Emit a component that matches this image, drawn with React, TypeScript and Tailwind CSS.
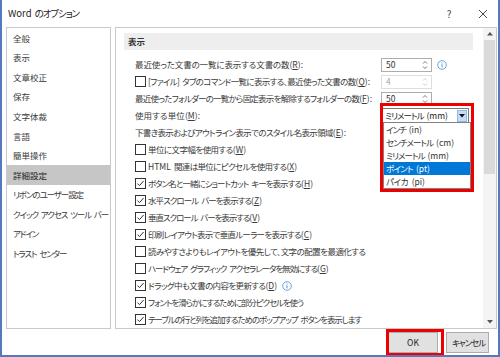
import React from "react";

/* latin run keeps its normal letter spacing */
const L = ({ children }: { children: React.ReactNode }) => <span className="tracking-normal">{children}</span>;

const K = ({ k, colon }: { k: string; colon?: boolean }) => (
  <span className="tracking-normal">
    (<span className="underline underline-offset-[1px]">{k}</span>){colon ? ":" : ""}
  </span>
);

/* text stretched to the exact width measured in the reference */
const J = ({ w, children, className = "" }: { w: string; children: React.ReactNode; className?: string }) => (
  <span
    className={`inline-block ${w} whitespace-nowrap leading-none tracking-[-1.1px] [word-spacing:2px] [text-align-last:justify] ${className}`}
  >
    {children}
  </span>
);

const CheckBox = ({ checked }: { checked: boolean }) => (
  <span className="w-[11px] h-[11px] shrink-0 border border-[#333333] bg-white flex items-center justify-center">
    {checked && (
      <svg width="9" height="9" viewBox="0 0 9 9">
        <polyline points="1.5,4.6 3.5,6.6 7.6,2" fill="none" stroke="#333" strokeWidth="1" />
      </svg>
    )}
  </span>
);

const Info = () => (
  <svg width="10" height="10" viewBox="0 0 10 10" className="shrink-0">
    <circle cx="5" cy="5" r="4.3" fill="none" stroke="#5b9bd5" strokeWidth="0.9" />
    <rect x="4.5" y="4.2" width="1" height="3.3" fill="#5b9bd5" />
    <rect x="4.5" y="2.4" width="1" height="1" fill="#5b9bd5" />
  </svg>
);

const Spin = ({ value, disabled }: { value: string; disabled?: boolean }) => (
  <div
    className={`w-[51px] h-[14px] border flex items-center justify-between pl-[4px] pr-[3px] bg-white ${
      disabled ? "border-[#dedede] text-[#a8a8a8]" : "border-[#adadad] text-[#333]"
    }`}
  >
    <span className="leading-none">{value}</span>
    <svg width="6" height="10" viewBox="0 0 6 10">
      <polyline points="1,3.5 3,1.5 5,3.5" fill="none" stroke={disabled ? "#c8c8c8" : "#666"} strokeWidth="0.9" />
      <polyline points="1,6.5 3,8.5 5,6.5" fill="none" stroke={disabled ? "#c8c8c8" : "#666"} strokeWidth="0.9" />
    </svg>
  </div>
);

type Row = {
  cb?: boolean;
  label: React.ReactNode;
  w: string;
  ctrl?: React.ReactNode;
  info?: boolean;
};

const rows: Row[] = [
  { label: <>最近使った文書の一覧に表示する文書の数<K k="R" colon /></>, w: "w-[168px]", ctrl: <Spin value="50" />, info: true },
  { cb: false, label: <>[ファイル] タブのコマンド一覧に表示する、最近使った文書の数<K k="Q" colon /></>, w: "w-[222px]", ctrl: <Spin value="4" disabled /> },
  { label: <>最近使ったフォルダーの一覧から固定表示を解除するフォルダーの数<K k="F" colon /></>, w: "w-[237px]", ctrl: <Spin value="50" /> },
  {
    label: <>使用する単位<K k="M" colon /></>,
    w: "w-[65px]",
    ctrl: (
      <div className="w-[88px] h-[15px] border border-[#7a7a7a] bg-white flex items-center justify-between pl-[3px] pr-[1px]">
        <J w="w-[63px]" className="text-[#222]">ミリメートル <L>(mm)</L></J>
        <span className="w-[10px] h-[12px] bg-[#c4dcf4] border border-[#8fbbe8] flex items-center justify-center">
          <svg width="6" height="4" viewBox="0 0 6 4">
            <polygon points="0,0 6,0 3,3.5" fill="#111" />
          </svg>
        </span>
      </div>
    ),
  },
  { label: <>下書き表示およびアウトライン表示でのスタイル名表示領域<K k="E" colon /></>, w: "w-[211px]" },
  { cb: false, label: <>単位に文字幅を使用する<K k="W" /></>, w: "w-[98px]" },
  { cb: false, label: <><L>HTML</L> 関連は単位にピクセルを使用する<K k="X" /></>, w: "w-[149px]" },
  { cb: true, label: <>ボタン名と一緒にショートカット キーを表示する<K k="H" /></>, w: "w-[165px]" },
  { cb: true, label: <>水平スクロール バーを表示する<K k="Z" /></>, w: "w-[114px]" },
  { cb: true, label: <>垂直スクロール バーを表示する<K k="V" /></>, w: "w-[112px]" },
  { cb: true, label: <>印刷レイアウト表示で垂直ルーラーを表示する<K k="C" /></>, w: "w-[164px]" },
  { cb: false, label: <>読みやすさよりもレイアウトを優先して、文字の配置を最適化する</>, w: "w-[217px]" },
  { cb: false, label: <>ハードウェア グラフィック アクセラレータを無効にする<K k="G" /></>, w: "w-[177px]" },
  { cb: true, label: <>ドラッグ中も文書の内容を更新する<K k="D" /></>, w: "w-[129px]", info: true },
  { cb: true, label: <>フォントを滑らかにするために部分ピクセルを使う</>, w: "w-[155px]" },
  { cb: true, label: <>テーブルの行と列を追加するためのポップアップ ボタンを表示します</>, w: "w-[212px]" },
];

const nav: { n: string; w?: string }[] = [
  { n: "全般" },
  { n: "表示" },
  { n: "文章校正" },
  { n: "保存" },
  { n: "文字体裁" },
  { n: "言語" },
  { n: "簡単操作" },
  { n: "詳細設定" },
  { n: "リボンのユーザー設定", w: "w-[68px]" },
  { n: "クイック アクセス ツール バー", w: "w-[89px]" },
  { n: "アドイン", w: "w-[23px]" },
  { n: "トラスト センター", w: "w-[52px]" },
];

const units: { k: string; l: string; w: string }[] = [
  { k: "インチ", l: "(in)", w: "w-[36px]" },
  { k: "センチメートル", l: "(cm)", w: "w-[68px]" },
  { k: "ミリメートル", l: "(mm)", w: "w-[63px]" },
  { k: "ポイント", l: "(pt)", w: "w-[44px]" },
  { k: "パイカ", l: "(pi)", w: "w-[39px]" },
];

export default function App() {
  return (
    <div className="relative w-[500px] h-[357px] bg-white border-x-2 border-b-2 border-[#5479bf] flex flex-col overflow-hidden font-['Noto_Sans_CJK_JP','Liberation_Sans',sans-serif] [font-feature-settings:'palt'] text-[8.5px] text-[#3a3a3a]">
      {/* title bar */}
      <div className="h-[27px] shrink-0 flex items-center justify-between pl-[6px] pr-[7px]">
        <J w="w-[62px]" className="text-[9.5px] text-[#222]"><L>Word</L> のオプション</J>
        <div className="flex items-center gap-[21px] text-[#444]">
          <span className="w-[10px] text-center text-[10px] leading-none">?</span>
          <span className="w-[16px] flex justify-center">
            <svg width="10" height="10" viewBox="0 0 10 10">
              <path d="M1,1 L9,9 M9,1 L1,9" stroke="#333" strokeWidth="0.9" />
            </svg>
          </span>
        </div>
      </div>

      {/* body */}
      <div className="h-[302px] shrink-0 flex gap-[4px] pl-[4px] pr-[1px]">
        <div className="w-[105px] shrink-0 border border-[#c9c9c9] flex flex-col">
          {nav.map(({ n, w }) => (
            <div
              key={n}
              className={`h-[19.6px] flex items-center pl-[6px] whitespace-nowrap ${
                n === "詳細設定" ? "bg-[#c6c6c6] text-[#222]" : ""
              }`}
            >
              {w ? <J w={w}>{n}</J> : <span className="leading-none">{n}</span>}
            </div>
          ))}
        </div>

        <div className="flex-1 border border-[#c9c9c9] flex">
          <div className="flex-1 flex flex-col">
            <div className="mt-[5px] ml-[8px] mr-[10px] h-[17px] bg-[#eeeeee] flex items-center pl-[4px] font-semibold text-[#333]">
              表示
            </div>
            <div className="mt-[6px] flex flex-col">
              {rows.map((r, i) => (
                <div key={i} className="h-[17px] flex items-center pl-[19px] whitespace-nowrap">
                  <div className={`${r.ctrl ? "w-[246px]" : ""} shrink-0 flex items-center gap-[2px]`}>
                    {r.cb !== undefined && <CheckBox checked={r.cb} />}
                    <J w={r.w}>{r.label}</J>
                    {r.info && !r.ctrl && <span className="ml-[3px]"><Info /></span>}
                  </div>
                  {r.ctrl}
                  {r.info && r.ctrl && <span className="ml-[5px]"><Info /></span>}
                </div>
              ))}
            </div>
          </div>
          {/* scrollbar */}
          <div className="w-[13px] shrink-0 bg-[#f4f4f4] flex flex-col">
            <div className="h-[12px] flex items-center justify-center">
              <svg width="6" height="4" viewBox="0 0 6 4">
                <polygon points="0,3.5 6,3.5 3,0" fill="#555" />
              </svg>
            </div>
            <div className="h-[134px] mx-[1px] bg-[#dadada]" />
            <div className="flex-1" />
            <div className="h-[12px] flex items-center justify-center">
              <svg width="6" height="4" viewBox="0 0 6 4">
                <polygon points="0,0 6,0 3,3.5" fill="#555" />
              </svg>
            </div>
          </div>
        </div>
      </div>

      {/* footer */}
      <div className="flex-1 flex justify-end items-start pt-[3px] pr-[9px] gap-[8px]">
        <button className="w-[50px] h-[21px] bg-[#e1e1e1] border border-[#adadad] text-[8.5px] text-[#222] leading-none">
          OK
        </button>
        <button className="w-[43px] h-[21px] bg-[#e1e1e1] border border-[#adadad] text-[#222] flex items-center justify-center">
          <J w="w-[31px]">キャンセル</J>
        </button>
      </div>

      {/* dropdown list overlay */}
      <div className="absolute left-[381px] top-[122px] w-[88px] h-[67px] border border-[#828282] bg-white flex flex-col">
        {units.map(({ k, l, w }) => (
          <div
            key={k}
            className={`h-[13px] flex items-center pl-[2px] ${
              k === "ポイント" ? "bg-[#0078d7] text-white" : "text-[#333]"
            }`}
          >
            <J w={w}>
              {k} <L>{l}</L>
            </J>
          </div>
        ))}
      </div>

      {/* red highlight frames */}
      <div className="absolute left-[378px] top-[103px] w-[94px] h-[89px] border-[3px] border-[#ee0000]" />
      <div className="absolute left-[384px] top-[329px] w-[58px] h-[27px] border-[3px] border-[#ee0000]" />
    </div>
  );
}
